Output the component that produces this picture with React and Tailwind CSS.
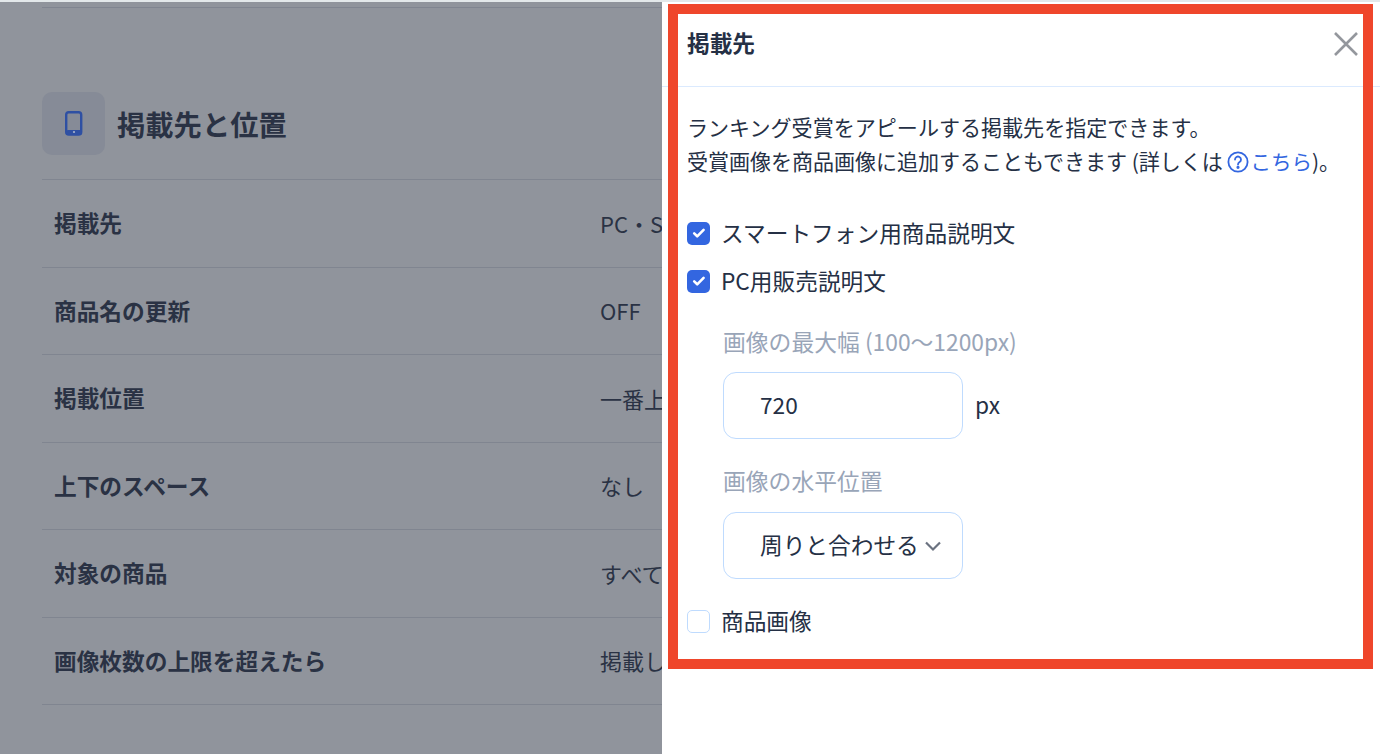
const font = { fontFamily: '"Noto Sans CJK JP", "Noto Sans", sans-serif' }

const rows = [
    ['掲載先', 'PC・SP'],
    ['商品名の更新', 'OFF'],
    ['掲載位置', '一番上'],
    ['上下のスペース', 'なし'],
    ['対象の商品', 'すべての商品'],
    ['画像枚数の上限を超えたら', '掲載しない'],
]

function Check({ checked, label }) {
    return (
        <div className="flex items-center gap-[11px] h-[22px] -ml-[1px]">
            {checked ? (
                <span className="flex items-center justify-center w-[23px] h-[23px] rounded-[5px] bg-[#3366e0]">
                    <svg width="16" height="16" viewBox="0 0 16 16" fill="none" stroke="#fff" strokeWidth="2.6" strokeLinecap="round" strokeLinejoin="round">
                        <path d="M3.2 8.4l3 2.9 6.4-6.4" />
                    </svg>
                </span>
            ) : (
                <span className="w-[23px] h-[23px] rounded-[5px] border border-[#bfdbfe] bg-white"></span>
            )}
            <span className="text-[22.7px] text-[#253045] whitespace-nowrap">{label}</span>
        </div>
    )
}

export default function App() {
    return (
        <div className="relative flex flex-col h-[754px] overflow-hidden bg-white" style={font}>
            <div className="h-[2px] bg-[#e3e8ea]"></div>
            <div className="flex flex-1 min-h-0">
                <div className="w-[662px] shrink-0 overflow-hidden bg-[#90949c] pl-[42px] text-[#2a3244]">
                    <div className="mt-[5px] border-t border-[#808590]"></div>
                    <div className="mt-[84px] flex items-center gap-[12px]">
                        <div className="flex items-center justify-center w-[63px] h-[63px] rounded-[10px] bg-[#868b97]">
                            <svg width="18" height="25" viewBox="0 0 18 25">
                                <rect x="1.2" y="1.2" width="15" height="22.4" rx="2.6" fill="none" stroke="#2f50a3" strokeWidth="2.4" />
                                <rect x="1" y="19" width="16" height="5" rx="2" fill="#2f50a3" />
                                <circle cx="9" cy="21" r="1.1" fill="#aab4cc" />
                            </svg>
                        </div>
                        <h2 className="text-[28.3px] font-bold whitespace-nowrap mt-[2px]">掲載先と位置</h2>
                    </div>
                    <div className="mt-[24px] border-t border-[#808590]">
                        {rows.map(([label, value]) => (
                            <div key={label} className="flex items-center h-[87.5px] border-b border-[#808590] pl-3 whitespace-nowrap">
                                <span className="w-[546px] shrink-0 text-[22.7px] font-bold leading-[30px]">{label}</span>
                                <span className="text-[22px] leading-[30px] -mt-[1px]">{value}</span>
                            </div>
                        ))}
                    </div>
                </div>
                <div className="flex-1 bg-white text-[#253045]">
                    <div className="flex items-center justify-between h-[85px] border-b border-[#dbeafe] pl-[26px] pr-[22px]">
                        <h3 className="text-[22.7px] font-bold -ml-[1px] -mt-[2px]">掲載先</h3>
                        <svg width="24" height="24" viewBox="0 0 24 24" stroke="#94979d" strokeWidth="2.6" fill="none">
                            <path d="M1 1l22 22M23 1L1 23" />
                        </svg>
                    </div>
                    <div className="pl-[26px]">
                        <p className="mt-[23px] -ml-[1px] text-[21.05px] leading-[34px] whitespace-nowrap">
                            ランキング受賞をアピールする掲載先を指定できます。
                            <br />
                            <span className="tracking-[-0.05px]">受賞画像を商品画像に追加することもできます (詳しくは </span>
                            <span className="text-[20.5px] text-[#3366e0]">
                                <svg className="inline-block align-[-3px] mr-[1px]" width="22" height="22" viewBox="0 0 22 22" fill="none" stroke="#3366e0" strokeWidth="1.8">
                                    <circle cx="11" cy="11" r="9.6" />
                                    <path d="M8 8.6a3 3 0 1 1 4.6 2.5c-1 .7-1.6 1.2-1.6 2.4" strokeLinecap="round" />
                                    <circle cx="11" cy="16.3" r="0.7" fill="#3366e0" />
                                </svg>
                                こちら
                            </span>
                            )。
                        </p>
                        <div className="mt-[44px] flex flex-col gap-[26px]">
                            <Check checked label="スマートフォン用商品説明文" />
                            <Check checked label="PC用販売説明文" />
                        </div>
                        <div className="mt-[33px] pl-[35px]">
                            <div className="text-[22.8px] leading-[34px] text-[#99a5b8] whitespace-nowrap">画像の最大幅 (100〜1200px)</div>
                            <div className="mt-[13px] flex items-center gap-[12px]">
                                <div className="flex items-center w-[240px] h-[67px] rounded-[13px] border border-[#bfdbfe] pl-[36px] text-[22.7px]">720</div>
                                <span className="text-[22.7px]">px</span>
                            </div>
                            <div className="mt-[25px] text-[22.8px] leading-[34px] text-[#99a5b8]">画像の水平位置</div>
                            <div className="mt-[14px] flex items-center justify-between w-[240px] h-[67px] rounded-[13px] border border-[#bfdbfe] pl-[36px] pr-[20px] text-[22.7px] whitespace-nowrap">
                                周りと合わせる
                                <svg className="shrink-0" width="18" height="18" viewBox="0 0 18 18" fill="none" stroke="#6b7280" strokeWidth="2.2">
                                    <path d="M2 5.5l7 7 7-7" />
                                </svg>
                            </div>
                        </div>
                        <div className="mt-[31px]">
                            <Check label="商品画像" />
                        </div>
                    </div>
                </div>
            </div>
            <div className="absolute left-[668px] top-[4px] w-[705px] h-[665px] border-[10px] border-[#ef462b] pointer-events-none"></div>
        </div>
    )
}
